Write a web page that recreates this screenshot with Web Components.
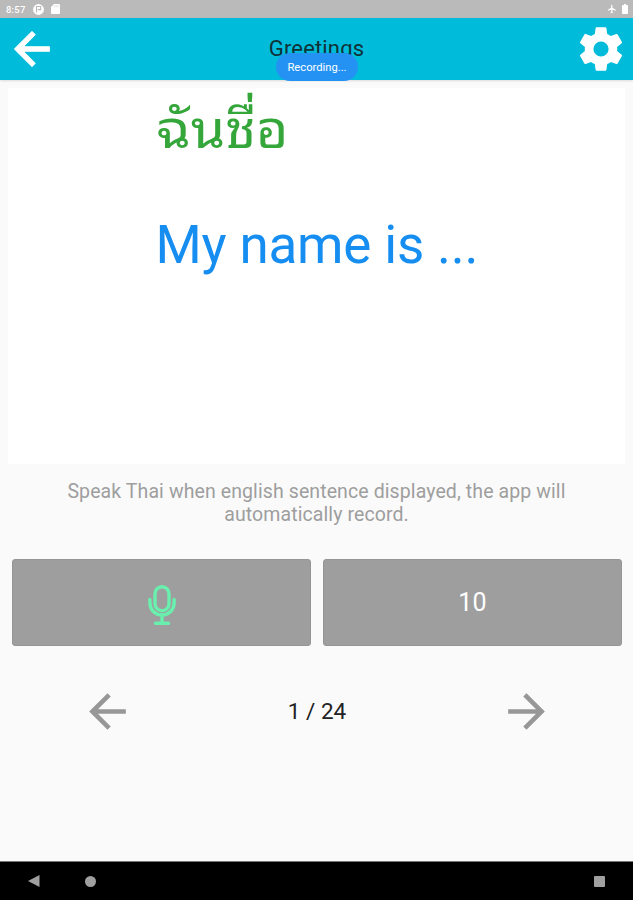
<!DOCTYPE html>
<html lang="en">
<head>
<meta charset="UTF-8">
<title>Greetings</title>
<style>
  html, body {
    margin: 0;
    height: 100%;
    overflow: hidden;
    background: #fafafa;
    font-family: Roboto, "Noto Sans", sans-serif;
  }
</style>
</head>
<body>
<lesson-screen></lesson-screen>

<script>
const ARROW = "M20 11H7.83l5.59-5.59L12 4l-8 8 8 8 1.41-1.41L7.83 13H20v-2z";

class StatusBar extends HTMLElement {
  constructor() {
    super();
    this.attachShadow({ mode: "open" });
  }

  connectedCallback() {
    this.shadowRoot.innerHTML = `
      <style>
        :host {
          display: flex;
          align-items: center;
          box-sizing: border-box;
          height: 18px;
          padding: 0 5px 0 6px;
          background: #bababa;
          color: #fff;
          font-size: 9.5px;
          font-weight: 500;
          letter-spacing: 0.2px;
        }
        svg { display: block; fill: currentColor; }
        .time { width: 27px; }
        .left { display: flex; flex: 1; gap: 7px; align-items: center; }
        .right { display: flex; gap: 5px; align-items: center; }
      </style>
      <span class="time">8:57</span>
      <div class="left">
        <svg width="11" height="11" viewBox="0 0 11 11">
          <circle cx="5.5" cy="5.5" r="5.4"/>
          <path d="M3.5 8.500v-6h4.200v3.100H4.800" fill="none" stroke="#bababa" stroke-width="1.1"/>
        </svg>
        <svg width="9" height="10" viewBox="0 0 9 10">
          <path d="M3 0h5q1 0 1 1v8q0 1-1 1H1q-1 0-1-1V3z"/>
          <path d="M3.4 1.4v1.8M5.2 1.4v1.8M7 1.4v1.8" stroke="#bababa" stroke-width=".5"/>
        </svg>
      </div>
      <div class="right">
        <svg width="10" height="10" viewBox="0 0 24 24">
          <path d="M21 16v-2l-8-5V3.500a1.500 1.500 0 0 0-3 0V9l-8 5v2l8-2.500V19l-2 1.500V22l3.500-1 3.500 1v-1.500L13 19v-5.500l8 2.500z"/>
        </svg>
        <svg width="6" height="10" viewBox="0 0 6 10">
          <path d="M2 0h2v1h1q1 0 1 1v7q0 1-1 1H1q-1 0-1-1V2q0-1 1-1h1z"/>
        </svg>
      </div>
    `;
  }
}

class AppHeader extends HTMLElement {
  constructor() {
    super();
    this.attachShadow({ mode: "open" });
  }

  connectedCallback() {
    this.shadowRoot.innerHTML = `
      <style>
        :host {
          position: relative;
          display: grid;
          grid-template-columns: 64px 1fr 64px;
          align-items: center;
          height: 62px;
          background: #00bcda;
          box-shadow: 0 1px 2px rgba(0, 0, 0, 0.12);
        }
        svg { display: block; fill: #fff; }
        .back { margin-left: 6px; }
        .gear { justify-self: end; margin-right: 6px; }
        .title {
          text-align: center;
          font-size: 22px;
          line-height: 26px;
          letter-spacing: 0.15px;
          color: #103238;
        }
        /* the toast floats over the title */
        .toast {
          position: absolute;
          left: 276px;
          top: 35px;
          width: 82px;
          height: 28px;
          box-sizing: border-box;
          border-radius: 14px;
          background: #2492f3;
          color: #fff;
          font-size: 11.2px;
          line-height: 30px;
          text-align: center;
        }
      </style>
      <svg class="back" width="52" height="52" viewBox="0 0 24 24"><path d="${ARROW}" stroke="#fff" stroke-width=".5" stroke-linejoin="round"/></svg>
      <span class="title"><slot></slot></span>
      <svg class="gear" width="52" height="52" viewBox="0 0 24 24">
        <path d="M19.430 12.980c.04-.32.070-.64.070-.98s-.03-.66-.07-.98l2.110-1.650c.19-.15.240-.42.120-.64l-2-3.460c-.12-.22-.39-.3-.61-.22l-2.490 1c-.52-.4-1.080-.73-1.690-.98l-.38-2.650C14.460 2.180 14.250 2 14 2h-4c-.25 0-.46.18-.49.420l-.38 2.650c-.61.25-1.170.59-1.690.98l-2.490-1c-.23-.09-.49 0-.61.220l-2 3.460c-.13.22-.07.49.120.64l2.110 1.650c-.04.32-.07.650-.07.980s.03.66.070.98l-2.110 1.650c-.19.15-.24.42-.12.640l2 3.460c.12.22.39.300.61.220l2.490-1c.52.4 1.080.73 1.690.98l.38 2.650c.03.24.24.42.490.420h4c.25 0 .46-.18.490-.42l.38-2.650c.61-.25 1.170-.59 1.690-.98l2.490 1c.23.09.49 0 .61-.22l2-3.460c.12-.22.070-.49-.12-.64l-2.110-1.650zM12 15.500a3.500 3.500 0 1 1 0-7 3.500 3.500 0 0 1 0 7z"/>
      </svg>
      <div class="toast"><slot name="toast"></slot></div>
    `;
  }
}

class PhraseCard extends HTMLElement {
  constructor() {
    super();
    this.attachShadow({ mode: "open" });
  }

  connectedCallback() {
    this.shadowRoot.innerHTML = `
      <style>
        :host {
          display: flex;
          justify-content: center;
          box-sizing: border-box;
          height: 376px;
          margin: 8px 8px 0;
          background: #fff;
        }
        .lines { display: flex; flex-direction: column; width: 326px; }
        .thai {
          height: 88px;
          padding-left: 2px;
          font-family: "Noto Sans Thai Looped", "Noto Looped Thai", Loma, Garuda, Waree, Umpush, Laksaman, "Noto Serif Thai", "Noto Sans Thai", sans-serif;
          font-size: 52px;
          line-height: 74px;
          white-space: nowrap;
          color: #35a63a;
          transform: scaleX(1.065);
          transform-origin: left;
        }
        .english {
          margin-top: 38px;
          padding-left: 2px;
          font-size: 53px;
          line-height: 62px;
          letter-spacing: -0.2px;
          white-space: nowrap;
          color: #168df0;
        }
      </style>
      <div class="lines">
        <div class="thai"><slot name="thai"></slot></div>
        <div class="english"><slot name="english"></slot></div>
      </div>
    `;
  }
}

class ActionButton extends HTMLElement {
  constructor() {
    super();
    this.attachShadow({ mode: "open" });
  }

  connectedCallback() {
    const mic = `
      <svg width="28" height="40" viewBox="0 0 28 40" fill="none" stroke="#69f0ae" stroke-width="3.4" stroke-linecap="round">
        <rect x="7" y="1.700" width="14" height="24" rx="7"/>
        <path d="M1.900 14.500v3.500a12.100 12 0 0 0 24.200 0v-3.500M14 30v8M7.500 38.300h13"/>
      </svg>`;
    this.shadowRoot.innerHTML = `
      <style>
        :host { display: block; flex: 1; }
        button {
          display: flex;
          align-items: center;
          justify-content: center;
          width: 100%;
          height: 87px;
          padding: 0;
          border: 1px solid #959595;
          border-radius: 3px;
          background: #9e9e9e;
          color: #fff;
          font: 25px Roboto, sans-serif;
          letter-spacing: 0.3px;
        }
        svg { display: block; margin-top: 4px; overflow: visible; }
      </style>
      <button>${this.hasAttribute("mic") ? mic : "<slot></slot>"}</button>
    `;
  }
}

class PageStepper extends HTMLElement {
  constructor() {
    super();
    this.attachShadow({ mode: "open" });
  }

  connectedCallback() {
    this.shadowRoot.innerHTML = `
      <style>
        :host {
          display: flex;
          align-items: center;
          justify-content: space-between;
          height: 56px;
          margin: 37px 79px 0 80px;
          font-size: 22.5px;
          color: #222;
        }
        svg { display: block; fill: #979797; }
        .next { transform: scaleX(-1); }
      </style>
      <svg width="55" height="55" viewBox="0 0 24 24"><path d="${ARROW}"/></svg>
      <span><slot></slot></span>
      <svg class="next" width="55" height="55" viewBox="0 0 24 24"><path d="${ARROW}"/></svg>
    `;
  }
}

class NavBar extends HTMLElement {
  constructor() {
    super();
    this.attachShadow({ mode: "open" });
  }

  connectedCallback() {
    this.shadowRoot.innerHTML = `
      <style>
        :host {
          display: flex;
          align-items: center;
          box-sizing: border-box;
          height: 39px;
          margin-top: auto;
          padding: 0 28px;
          border-top: 1px solid #777;
          background: #000;
        }
        svg { display: block; fill: #a0a0a0; }
        .home { margin-left: 45px; }
        .recent { margin-left: auto; }
      </style>
      <svg width="12" height="12"><path d="M0 6L11.500 0v12z"/></svg>
      <svg class="home" width="11" height="11"><circle cx="5.500" cy="5.500" r="5.500"/></svg>
      <svg class="recent" width="11" height="11"><rect width="11" height="11" rx="1"/></svg>
    `;
  }
}

class LessonScreen extends HTMLElement {
  constructor() {
    super();
    this.attachShadow({ mode: "open" });
  }

  connectedCallback() {
    this.shadowRoot.innerHTML = `
      <style>
        :host {
          display: flex;
          flex-direction: column;
          height: 100vh;
          background: #fafafa;
        }
        .hint {
          margin: 16px 0 0;
          font-size: 19.5px;
          line-height: 23px;
          letter-spacing: 0.1px;
          text-align: center;
          color: #9e9e9e;
        }
        .actions { display: flex; gap: 12px; padding: 33px 11px 0 12px; }
      </style>
      <status-bar></status-bar>
      <app-header>Greetings<span slot="toast">Recording...</span></app-header>
      <phrase-card>
        <span slot="thai" lang="th">ฉันชื่อ</span>
        <span slot="english">My name is ...</span>
      </phrase-card>
      <p class="hint">Speak Thai when english sentence displayed, the app will<br>automatically record.</p>
      <div class="actions">
        <action-button mic></action-button>
        <action-button>10</action-button>
      </div>
      <page-stepper>1 / 24</page-stepper>
      <nav-bar></nav-bar>
    `;
  }
}

customElements.define("status-bar", StatusBar);
customElements.define("app-header", AppHeader);
customElements.define("phrase-card", PhraseCard);
customElements.define("action-button", ActionButton);
customElements.define("page-stepper", PageStepper);
customElements.define("nav-bar", NavBar);
customElements.define("lesson-screen", LessonScreen);
</script>
</body>
</html>
